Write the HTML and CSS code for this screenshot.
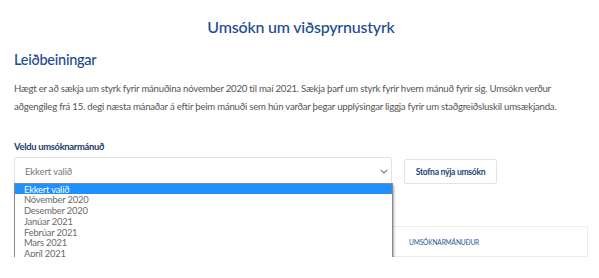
FILE: index.html
```html
<!DOCTYPE html>
<html lang="is">
<head>
<meta charset="utf-8">
<link rel="stylesheet" href="styles.css">
</head>
<body>
<main class="page">
  <h1 class="title">Umsókn um viðspyrnustyrk</h1>
  <h2 class="subtitle">Leiðbeiningar</h2>
  <p class="intro">Hægt er að sækja um styrk fyrir mánuðina nóvember 2020 til maí 2021. Sækja þarf um styrk fyrir hvern mánuð fyrir sig. Umsókn verður aðgengileg frá 15. degi næsta mánaðar á eftir þeim mánuði sem hún varðar þegar upplýsingar liggja fyrir um staðgreiðsluskil umsækjanda.</p>
  <label class="label">Veldu umsóknarmánuð</label>
  <div class="row">
    <div class="select-wrap">
      <div class="select">
        <span>Ekkert valið</span>
        <svg class="chev" width="8" height="5" viewBox="0 0 8 5"><path d="M0.8 0.8 L4 4 L7.2 0.8" fill="none" stroke="#777" stroke-width="1.1"/></svg>
      </div>
      <ul class="dropdown">
        <li class="active">Ekkert valið</li>
        <li>Nóvember 2020</li>
        <li>Desember 2020</li>
        <li>Janúar 2021</li>
        <li>Febrúar 2021</li>
        <li>Mars 2021</li>
        <li>Apríl 2021</li>
        <li>Maí 2021</li>
      </ul>
    </div>
    <button class="btn">Stofna nýja umsókn</button>
  </div>
  <div class="table">
    <span class="th">UMSÓKNARMÁNUÐUR</span>
  </div>
</main>
</body>
</html>
```
FILE: styles.css
```css
* { box-sizing: border-box; }
html, body { margin: 0; padding: 0; background: #fff; }
body { font-family: Lato, "Open Sans", sans-serif; color: #555; }
.page { padding: 0 11px 0 14px; }
.title {
  margin: 0; padding-top: 17px;
  font-size: 16px; line-height: 20px; font-weight: 500; letter-spacing: -0.2px;
  color: #1b4a8e; text-align: center;
}
.subtitle {
  margin: 13px 0 0; font-size: 14.5px; line-height: 20px; font-weight: 500; letter-spacing: -0.25px;
  color: #1b4a8e;
}
.intro {
  margin: 10px 0 0; font-size: 9.6px; line-height: 18px; letter-spacing: -0.22px; color: #555;
}
.label {
  display: block; margin-top: 25px;
  font-size: 9.4px; line-height: 12px; font-weight: 700; letter-spacing: -0.3px; color: #243d6b;
}
.row { display: flex; align-items: flex-start; gap: 12px; margin-top: 4px; }
.select-wrap { position: relative; width: 378px; }
.select {
  height: 28px; border: 1px solid #e3e3e3; border-radius: 2px;
  display: flex; align-items: center; justify-content: space-between;
  padding: 0 3px 0 10px; font-size: 9.5px; letter-spacing: -0.1px; color: #777;
}
.chev { display: block; }
.dropdown {
  position: absolute; left: 0; top: 25.5px; width: 379px;
  margin: 0; padding: 0; list-style: none; background: #fff;
  border: 1px solid #8a8a8a;
  box-shadow: 1px 2px 2px rgba(0,0,0,0.35);
  font-size: 9.4px; letter-spacing: -0.2px; color: #6b6b6b; z-index: 2;
}
.dropdown li { height: 10.8px; line-height: 11px; padding-left: 9px; }
.dropdown li.active { background: #1e90ff; color: #fff; }
.btn {
  margin-top: 2px; height: 25px; width: 93px; padding: 0;
  background: #fff; border: 1px solid #e3e3e3; border-radius: 2px;
  font-family: Lato, sans-serif; font-size: 8.6px; font-weight: 700; letter-spacing: -0.3px; color: #24477a;
}
.table {
  margin-top: 41px; height: 31px; border: 1px solid #ececec;
  display: flex; align-items: center; padding-left: 394px;
}
.th { font-size: 6.6px; color: #2b5797; letter-spacing: -0.15px; }
```
